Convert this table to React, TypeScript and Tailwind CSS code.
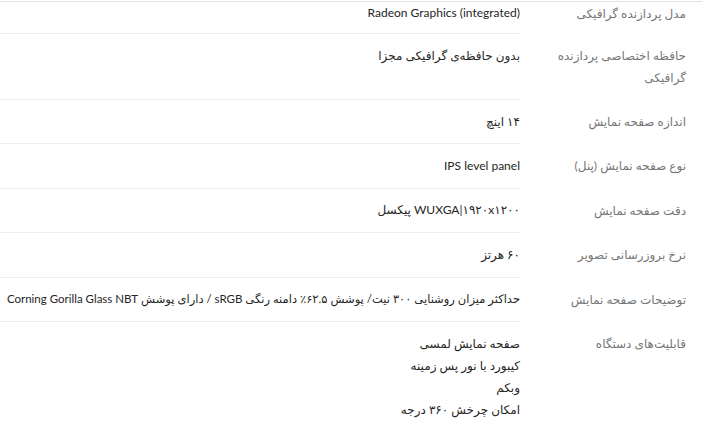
const specs: { label: string; values: string[]; tight?: boolean }[] = [
  { label: "حافظه اختصاصی پردازنده گرافیکی", values: ["بدون حافظه‌ی گرافیکی مجزا"] },
  { label: "اندازه صفحه نمایش", values: ["۱۴ اینچ"] },
  { label: "نوع صفحه نمایش (پنل)", values: ["IPS level panel"] },
  { label: "دقت صفحه نمایش", values: ["WUXGA|۱۹۲۰x۱۲۰۰ پیکسل"] },
  { label: "نرخ بروزرسانی تصویر", values: ["۶۰ هرتز"] },
  {
    label: "توضیحات صفحه نمایش",
    values: [
      "حداکثر میزان روشنایی ۳۰۰ نیت/ پوشش ۶۲.۵٪ دامنه رنگی sRGB / دارای پوشش Corning Gorilla Glass NBT",
    ],
    tight: true,
  },
  {
    label: "قابلیت‌های دستگاه",
    values: ["صفحه نمایش لمسی", "کیبورد با نور پس زمینه", "وبکم", "امکان چرخش ۳۶۰ درجه"],
  },
];

const SpecRow = ({
  label,
  values,
  last,
  tight,
}: {
  label: string;
  values: string[];
  last?: boolean;
  tight?: boolean;
}) => {
  return (
    <div className="flex">
      <div className="w-[182px] shrink-0 pr-4 pl-[26px] py-[11px] text-[#767676]">
        <p>{label}</p>
      </div>
      <div
        className={
          "flex-1 min-w-0 py-[10.7px] text-[#262626] whitespace-nowrap " +
          (tight ? "text-[11.5px] " : "") +
          (last ? "" : "border-b border-[#efefef]")
        }
      >
        {values.map((v) => (
          <p key={v}>{v}</p>
        ))}
      </div>
    </div>
  );
};

export default function App() {
  return (
    <div
      dir="rtl"
      className="w-[702px] h-[436px] overflow-hidden bg-white pt-px text-[12px] leading-[22px] font-['Lato','DejaVu_Sans',sans-serif]"
    >
      <div className="border-t border-[#e2e2e2]">
        {/* first row is cut off at the top */}
        <div className="flex">
          <div className="w-[182px] shrink-0 pr-4 pl-[26px] pt-px text-[#767676]">
            <p>مدل پردازنده گرافیکی</p>
          </div>
          <div className="flex-1 pb-[9px] text-[#262626] border-b border-[#efefef]">
            <p>Radeon Graphics (integrated)</p>
          </div>
        </div>
        {specs.map((s, i) => (
          <SpecRow
            key={s.label}
            label={s.label}
            values={s.values}
            tight={s.tight}
            last={i === specs.length - 1}
          />
        ))}
      </div>
    </div>
  );
}
